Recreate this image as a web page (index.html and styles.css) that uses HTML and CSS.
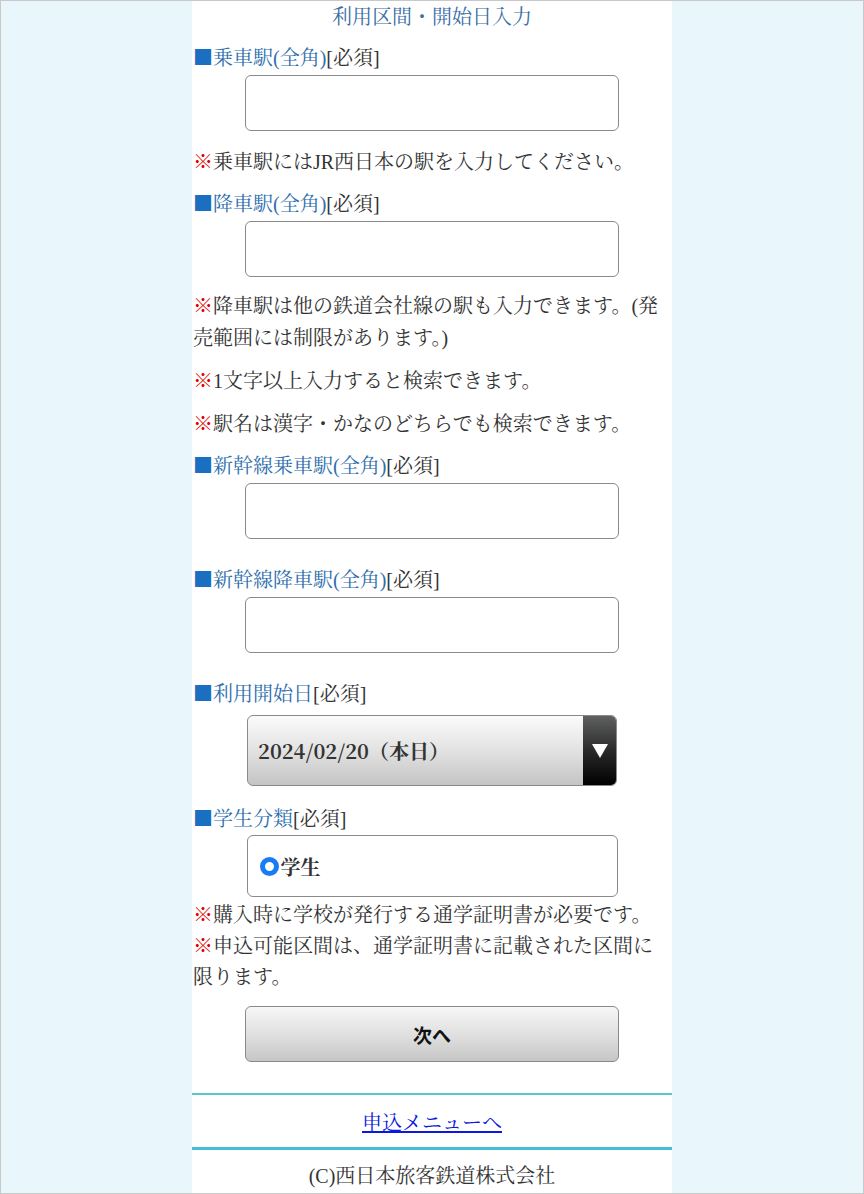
FILE: index.html
```html
<!DOCTYPE html>
<html lang="ja">
<head>
<meta charset="utf-8">
<title>利用区間・開始日入力</title>
<link rel="stylesheet" href="styles.css">
</head>
<body>
<div class="frame">
  <div class="column">
    <h1 class="title">利用区間・開始日入力</h1>

    <div class="label lb-top"><span class="sq">■</span><span class="lt">乗車駅(全角)</span>[必須]</div>
    <div class="field"><div class="textbox"></div></div>
    <p class="note n1"><span class="kome">※</span>乗車駅にはJR西日本の駅を入力してください。</p>

    <div class="label lb-a"><span class="sq">■</span><span class="lt">降車駅(全角)</span>[必須]</div>
    <div class="field"><div class="textbox"></div></div>
    <p class="note n2"><span class="kome">※</span>降車駅は他の鉄道会社線の駅も入力できます。(発売範囲には制限があります。)</p>
    <p class="note n3"><span class="kome">※</span>1文字以上入力すると検索できます。</p>
    <p class="note n3"><span class="kome">※</span>駅名は漢字・かなのどちらでも検索できます。</p>

    <div class="label lb-a"><span class="sq">■</span><span class="lt">新幹線乗車駅(全角)</span>[必須]</div>
    <div class="field"><div class="textbox"></div></div>

    <div class="label lb-b"><span class="sq">■</span><span class="lt">新幹線降車駅(全角)</span>[必須]</div>
    <div class="field"><div class="textbox"></div></div>

    <div class="label lb-b"><span class="sq">■</span><span class="lt">利用開始日</span>[必須]</div>
    <div class="field select-wrap">
      <div class="select">
        <span class="select-text">2024/02/20（本日）</span>
        <span class="select-arrow"><svg width="16" height="14" viewBox="0 0 16 14"><polygon points="0,0 16,0 8,14" fill="#fff"/></svg></span>
      </div>
    </div>

    <div class="label lb-c"><span class="sq">■</span><span class="lt">学生分類</span>[必須]</div>
    <div class="field radio-wrap">
      <div class="radiobox"><span class="radio"></span><span class="radio-label">学生</span></div>
    </div>

    <div class="notes-bottom">
      <p class="note nb"><span class="kome">※</span>購入時に学校が発行する通学証明書が必要です。</p>
      <p class="note nb"><span class="kome">※</span>申込可能区間は、通学証明書に記載された区間に限ります。</p>
    </div>

    <div class="field btn-wrap"><div class="button">次へ</div></div>

    <div class="footer-link"><a href="#">申込メニューへ</a></div>
    <div class="copyright">(C)西日本旅客鉄道株式会社</div>
  </div>
</div>
</body>
</html>
```

FILE: styles.css
```css
html, body {
  margin: 0;
  padding: 0;
}
body {
  font-family: "Liberation Serif", "Noto Serif CJK JP", "Noto Sans CJK JP", serif;
  font-size: 20px;
  color: #333;
}
.frame {
  box-sizing: border-box;
  height: 1194px;
  border: 1px solid #c9c9c9;
  background: #e9f6fc;
  overflow: hidden;
}
.column {
  width: 480px;
  margin: 0 auto;
  background: #fff;
  height: 100%;
}
.title {
  margin: 0;
  font-size: 20px;
  font-weight: normal;
  line-height: 32px;
  color: #3a6ea6;
  text-align: center;
}
.label {
  line-height: 32px;
  color: #333;
  padding-left: 1px;
}
.lb-top { margin-top: 9px; }
.lb-a { margin-top: 10px; }
.lb-b { margin-top: 25px; }
.lb-c { margin-top: 17px; }
.sq {
  font-family: "Noto Serif CJK JP", "Noto Sans CJK JP", serif;
  line-height: 20px;
  color: #1a6fc0;
}
.lt {
  color: #2e6eae;
}
.field {
  display: flex;
  justify-content: center;
}
.textbox {
  margin-top: 1px;
  width: 374px;
  height: 56px;
  box-sizing: border-box;
  border: 1px solid #8a8a8a;
  border-radius: 6px;
  background: #fff;
}
.note {
  margin: 0;
  line-height: 32px;
  padding: 0 8px 0 1px;
  color: #333;
}
.kome {
  color: #e00000;
  font-family: "Noto Serif CJK JP", "Noto Sans CJK JP", serif;
  line-height: 20px;
}
.n1 { margin-top: 15px; }
.n2 { margin-top: 13px; }
.n3 { margin-top: 11px; }
.select-wrap { margin-top: 5px; }
.select {
  width: 370px;
  height: 71px;
  box-sizing: border-box;
  border: 1px solid #8a8a8a;
  border-radius: 6px;
  background: linear-gradient(to bottom, #fbfbfb 0%, #e2e2e2 50%, #c4c4c4 100%);
  display: flex;
  align-items: center;
  overflow: hidden;
}
.select-text {
  flex: 1;
  padding-left: 10px;
  font-family: "Noto Serif CJK JP", "Liberation Serif", serif;
  font-weight: bold;
  color: #333;
}
.select-arrow {
  width: 33px;
  align-self: stretch;
  background: linear-gradient(to bottom, #5e615f 0%, #2a2a2a 50%, #000 100%);
  display: flex;
  align-items: center;
  justify-content: center;
}
.radio-wrap { margin-top: 0; }
.radiobox {
  width: 371px;
  height: 62px;
  box-sizing: border-box;
  border: 1px solid #8a8a8a;
  border-radius: 6px;
  display: flex;
  align-items: center;
  padding-left: 12px;
}
.radio {
  width: 19px;
  height: 19px;
  box-sizing: border-box;
  border-radius: 50%;
  border: 5.5px solid #1a7cf5;
  background: #fff;
  margin-right: 2px;
}
.radio-label {
  font-family: "Noto Serif CJK JP", serif;
  font-weight: bold;
  color: #333;
}
.notes-bottom { margin-top: 3px; }
.nb { line-height: 31px; }
.btn-wrap { margin-top: 13px; }
.button {
  width: 374px;
  height: 56px;
  box-sizing: border-box;
  border: 1px solid #8a8a8a;
  border-radius: 6px;
  background: linear-gradient(to bottom, #f7f7f7 0%, #dedede 55%, #c6c6c6 100%);
  display: flex;
  align-items: center;
  justify-content: center;
  font-family: "Noto Sans CJK JP", sans-serif;
  font-weight: bold;
  font-size: 19px;
  color: #111;
}
.footer-link {
  margin-top: 31px;
  border-top: 2px solid #5cc3d3;
  border-bottom: 3px solid #45bfd6;
  height: 52px;
  display: flex;
  align-items: center;
  justify-content: center;
}
.footer-link a {
  color: #0a18e0;
  text-decoration: underline;
}
.copyright {
  text-align: center;
  line-height: 52px;
  color: #333;
}
```
